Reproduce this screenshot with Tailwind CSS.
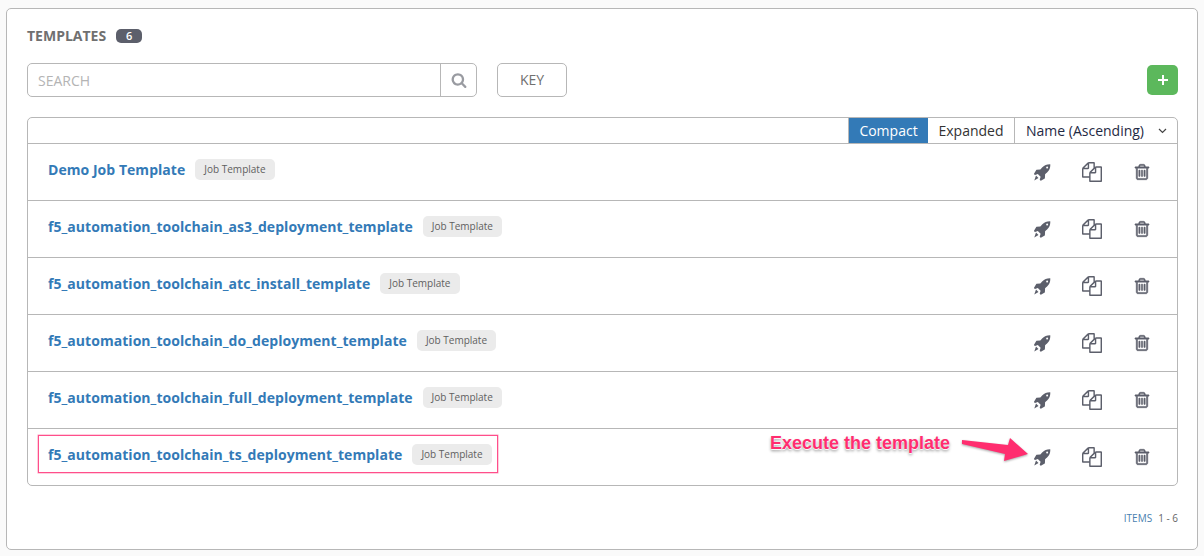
<!DOCTYPE html>
<html>
<head>
<meta charset="utf-8">
<script src="https://cdn.jsdelivr.net/npm/@tailwindcss/browser@4"></script>
</head>
<body class="bg-[#fafafa] font-['Open_Sans',sans-serif] w-[1204px] h-[556px] overflow-hidden">
<div class="relative h-[556px] pt-2 pl-1.5 pr-1.5">
  <div class="bg-white border border-[#b7b7b7] rounded-[5px] h-[542px] pl-5 pr-[19px] pt-[17px]">
    <div class="flex items-center h-5 gap-[10px]">
      <span class="text-sm font-bold text-[#707070] leading-5">TEMPLATES</span>
      <span class="bg-[#5c5f6b] text-white text-[11px] font-semibold rounded-[5px] w-[26px] h-[14px] leading-[14px] text-center">6</span>
    </div>
    <div class="flex items-center mt-[17px] h-[34px]">
      <div class="flex w-[450px] h-[34px] border border-[#b7b7b7] rounded-[5px]">
        <div class="flex-1 pl-2.5 pt-px text-sm leading-8 text-[#b4b4b4]">SEARCH</div>
        <div class="w-9 border-l border-[#b7b7b7] flex items-center justify-center">
          <svg class="w-[16px] h-[16px] fill-[#999ba1]" viewBox="0 0 1792 1792"><path d="M1216 832q0-185-131.500-316.500t-316.500-131.500-316.500 131.500-131.500 316.500 131.500 316.500 316.500 131.500 316.500-131.500 131.500-316.500zm512 832q0 52-38 90t-90 38q-54 0-90-38l-343-342q-179 124-399 124-143 0-273.500-55.500t-225-150-150-225-55.500-273.500 55.500-273.500 150-225 225-150 273.500-55.500 273.500 55.500 225 150 150 225 55.500 273.500q0 220-124 399l343 343q37 37 37 90z"/></svg>
        </div>
      </div>
      <div class="ml-5 w-[70px] h-[34px] border border-[#b7b7b7] rounded-[5px] text-center text-sm leading-8 text-[#707070]">KEY</div>
      <div class="ml-auto w-[31px] h-[30px] bg-[#5cb85c] rounded-[5px] flex items-center justify-center">
        <svg class="w-[10px] h-[10px]" viewBox="0 0 10 10"><path d="M5 0v10M0 5h10" stroke="#fff" stroke-width="2"/></svg>
      </div>
    </div>
    <div class="mt-5 border border-[#b7b7b7] rounded-[5px] h-[369px]">
      <div class="flex justify-end h-[26px] border-b border-[#b7b7b7] text-sm leading-[25px]">
        <div class="bg-[#337ab7] text-white w-[80px] text-center border-l border-[#b7b7b7]">Compact</div>
        <div class="w-[86px] text-center text-[#333]">Expanded</div>
        <div class="w-[163px] border-l border-[#b7b7b7] flex items-center pl-[11px] rounded-tr-[5px]">
          <span class="text-[#1f2a44]">Name (Ascending)</span>
          <svg class="ml-[14px] w-[9px] h-[6px]" viewBox="0 0 9 6"><path d="M1 1l3.500 3.500L8 1" fill="none" stroke="#444" stroke-width="1.200"/></svg>
        </div>
      </div>

      <div class="flex items-center h-[57px] border-b border-[#b7b7b7] pl-5">
        <span class="mb-1 text-sm font-bold text-[#337ab7] tracking-[0.045px]">Demo Job Template</span>
        <span class="mb-1.5 ml-[10px] bg-[#ebebeb] text-[#606060] text-[10px] leading-[21px] h-[21px] px-[9px] rounded-[5px]">Job Template</span>
        <div class="ml-auto flex items-center w-[146px] pl-[2px] gap-[31px]">
          <svg class="w-[18px] h-[18px] fill-[#5c5f6b]" viewBox="0 0 1792 1792"><path d="M1504 448q0-40-28-68t-68-28-68 28-28 68 28 68 68 28 68-28 28-68zm224-288q0 249-75.500 430.500t-253.500 360.500q-81 80-195 176l-20 379q-2 16-16 26l-384 224q-7 4-16 4-12 0-23-9l-64-64q-13-14-8-32l85-276-281-281-276 85q-3 1-9 1-14 0-23-9l-64-64q-17-19-5-39l224-384q10-14 26-16l379-20q96-114 176-195 188-187 358-258t431-71q14 0 24 9.500t10 22.500z"/><path d="M300 1240L550 1490L130 1730Z"/></svg>
          <svg class="w-[20px] h-[20px] fill-[#5c5f6b]" viewBox="0 0 1792 1792"><path d="M1696 384q40 0 68 28t28 68v1216q0 40-28 68t-68 28h-960q-40 0-68-28t-28-68v-288h-544q-40 0-68-28t-28-68v-672q0-40 20-88t48-76l408-408q28-28 76-48t88-20h416q40 0 68 28t28 68v328q68-40 128-40h416zm-544 213l-299 299h299v-299zm-640-384l-299 299h299v-299zm196 647l316-316v-416h-384v416q0 40-28 68t-68 28h-416v640h512v-256q0-40 20-88t48-76zm956 804v-1152h-384v416q0 40-28 68t-68 28h-416v640h896z"/></svg>
          <svg class="w-[18px] h-[18px] fill-[#5c5f6b] stroke-[#5c5f6b] [stroke-width:50]" viewBox="0 0 1792 1792"><path d="M704 736v576q0 14-9 23t-23 9h-64q-14 0-23-9t-9-23v-576q0-14 9-23t23-9h64q14 0 23 9t9 23zm256 0v576q0 14-9 23t-23 9h-64q-14 0-23-9t-9-23v-576q0-14 9-23t23-9h64q14 0 23 9t9 23zm256 0v576q0 14-9 23t-23 9h-64q-14 0-23-9t-9-23v-576q0-14 9-23t23-9h64q14 0 23 9t9 23zm128 724v-948h-896v948q0 22 7 40.500t14.500 27 10.500 8.500h832q3 0 10.500-8.500t14.500-27 7-40.500zm-672-1076h448l-48-117q-7-9-17-11h-317q-10 2-17 11zm928 32v64q0 14-9 23t-23 9h-96v948q0 83-47 143.500t-113 60.500h-832q-66 0-113-58.500t-47-141.500v-952h-96q-14 0-23-9t-9-23v-64q0-14 9-23t23-9h309l70-167q15-37 54-63t79-26h320q40 0 79 26t54 63l70 167h309q14 0 23 9t9 23z"/></svg>
        </div>
      </div>
      <div class="flex items-center h-[57px] border-b border-[#b7b7b7] pl-5">
        <span class="mb-1 text-sm font-bold text-[#337ab7] tracking-[0.045px]">f5_automation_toolchain_as3_deployment_template</span>
        <span class="mb-1.5 ml-[10px] bg-[#ebebeb] text-[#606060] text-[10px] leading-[21px] h-[21px] px-[9px] rounded-[5px]">Job Template</span>
        <div class="ml-auto flex items-center w-[146px] pl-[2px] gap-[31px]">
          <svg class="w-[18px] h-[18px] fill-[#5c5f6b]" viewBox="0 0 1792 1792"><path d="M1504 448q0-40-28-68t-68-28-68 28-28 68 28 68 68 28 68-28 28-68zm224-288q0 249-75.500 430.500t-253.500 360.500q-81 80-195 176l-20 379q-2 16-16 26l-384 224q-7 4-16 4-12 0-23-9l-64-64q-13-14-8-32l85-276-281-281-276 85q-3 1-9 1-14 0-23-9l-64-64q-17-19-5-39l224-384q10-14 26-16l379-20q96-114 176-195 188-187 358-258t431-71q14 0 24 9.500t10 22.500z"/><path d="M300 1240L550 1490L130 1730Z"/></svg>
          <svg class="w-[20px] h-[20px] fill-[#5c5f6b]" viewBox="0 0 1792 1792"><path d="M1696 384q40 0 68 28t28 68v1216q0 40-28 68t-68 28h-960q-40 0-68-28t-28-68v-288h-544q-40 0-68-28t-28-68v-672q0-40 20-88t48-76l408-408q28-28 76-48t88-20h416q40 0 68 28t28 68v328q68-40 128-40h416zm-544 213l-299 299h299v-299zm-640-384l-299 299h299v-299zm196 647l316-316v-416h-384v416q0 40-28 68t-68 28h-416v640h512v-256q0-40 20-88t48-76zm956 804v-1152h-384v416q0 40-28 68t-68 28h-416v640h896z"/></svg>
          <svg class="w-[18px] h-[18px] fill-[#5c5f6b] stroke-[#5c5f6b] [stroke-width:50]" viewBox="0 0 1792 1792"><path d="M704 736v576q0 14-9 23t-23 9h-64q-14 0-23-9t-9-23v-576q0-14 9-23t23-9h64q14 0 23 9t9 23zm256 0v576q0 14-9 23t-23 9h-64q-14 0-23-9t-9-23v-576q0-14 9-23t23-9h64q14 0 23 9t9 23zm256 0v576q0 14-9 23t-23 9h-64q-14 0-23-9t-9-23v-576q0-14 9-23t23-9h64q14 0 23 9t9 23zm128 724v-948h-896v948q0 22 7 40.500t14.500 27 10.500 8.500h832q3 0 10.500-8.500t14.500-27 7-40.500zm-672-1076h448l-48-117q-7-9-17-11h-317q-10 2-17 11zm928 32v64q0 14-9 23t-23 9h-96v948q0 83-47 143.500t-113 60.500h-832q-66 0-113-58.500t-47-141.500v-952h-96q-14 0-23-9t-9-23v-64q0-14 9-23t23-9h309l70-167q15-37 54-63t79-26h320q40 0 79 26t54 63l70 167h309q14 0 23 9t9 23z"/></svg>
        </div>
      </div>
      <div class="flex items-center h-[57px] border-b border-[#b7b7b7] pl-5">
        <span class="mb-1 text-sm font-bold text-[#337ab7] tracking-[0.045px]">f5_automation_toolchain_atc_install_template</span>
        <span class="mb-1.5 ml-[10px] bg-[#ebebeb] text-[#606060] text-[10px] leading-[21px] h-[21px] px-[9px] rounded-[5px]">Job Template</span>
        <div class="ml-auto flex items-center w-[146px] pl-[2px] gap-[31px]">
          <svg class="w-[18px] h-[18px] fill-[#5c5f6b]" viewBox="0 0 1792 1792"><path d="M1504 448q0-40-28-68t-68-28-68 28-28 68 28 68 68 28 68-28 28-68zm224-288q0 249-75.500 430.500t-253.500 360.500q-81 80-195 176l-20 379q-2 16-16 26l-384 224q-7 4-16 4-12 0-23-9l-64-64q-13-14-8-32l85-276-281-281-276 85q-3 1-9 1-14 0-23-9l-64-64q-17-19-5-39l224-384q10-14 26-16l379-20q96-114 176-195 188-187 358-258t431-71q14 0 24 9.500t10 22.500z"/><path d="M300 1240L550 1490L130 1730Z"/></svg>
          <svg class="w-[20px] h-[20px] fill-[#5c5f6b]" viewBox="0 0 1792 1792"><path d="M1696 384q40 0 68 28t28 68v1216q0 40-28 68t-68 28h-960q-40 0-68-28t-28-68v-288h-544q-40 0-68-28t-28-68v-672q0-40 20-88t48-76l408-408q28-28 76-48t88-20h416q40 0 68 28t28 68v328q68-40 128-40h416zm-544 213l-299 299h299v-299zm-640-384l-299 299h299v-299zm196 647l316-316v-416h-384v416q0 40-28 68t-68 28h-416v640h512v-256q0-40 20-88t48-76zm956 804v-1152h-384v416q0 40-28 68t-68 28h-416v640h896z"/></svg>
          <svg class="w-[18px] h-[18px] fill-[#5c5f6b] stroke-[#5c5f6b] [stroke-width:50]" viewBox="0 0 1792 1792"><path d="M704 736v576q0 14-9 23t-23 9h-64q-14 0-23-9t-9-23v-576q0-14 9-23t23-9h64q14 0 23 9t9 23zm256 0v576q0 14-9 23t-23 9h-64q-14 0-23-9t-9-23v-576q0-14 9-23t23-9h64q14 0 23 9t9 23zm256 0v576q0 14-9 23t-23 9h-64q-14 0-23-9t-9-23v-576q0-14 9-23t23-9h64q14 0 23 9t9 23zm128 724v-948h-896v948q0 22 7 40.500t14.500 27 10.500 8.500h832q3 0 10.500-8.500t14.500-27 7-40.500zm-672-1076h448l-48-117q-7-9-17-11h-317q-10 2-17 11zm928 32v64q0 14-9 23t-23 9h-96v948q0 83-47 143.500t-113 60.500h-832q-66 0-113-58.500t-47-141.500v-952h-96q-14 0-23-9t-9-23v-64q0-14 9-23t23-9h309l70-167q15-37 54-63t79-26h320q40 0 79 26t54 63l70 167h309q14 0 23 9t9 23z"/></svg>
        </div>
      </div>
      <div class="flex items-center h-[57px] border-b border-[#b7b7b7] pl-5">
        <span class="mb-1 text-sm font-bold text-[#337ab7] tracking-[0.045px]">f5_automation_toolchain_do_deployment_template</span>
        <span class="mb-1.5 ml-[10px] bg-[#ebebeb] text-[#606060] text-[10px] leading-[21px] h-[21px] px-[9px] rounded-[5px]">Job Template</span>
        <div class="ml-auto flex items-center w-[146px] pl-[2px] gap-[31px]">
          <svg class="w-[18px] h-[18px] fill-[#5c5f6b]" viewBox="0 0 1792 1792"><path d="M1504 448q0-40-28-68t-68-28-68 28-28 68 28 68 68 28 68-28 28-68zm224-288q0 249-75.500 430.500t-253.500 360.500q-81 80-195 176l-20 379q-2 16-16 26l-384 224q-7 4-16 4-12 0-23-9l-64-64q-13-14-8-32l85-276-281-281-276 85q-3 1-9 1-14 0-23-9l-64-64q-17-19-5-39l224-384q10-14 26-16l379-20q96-114 176-195 188-187 358-258t431-71q14 0 24 9.500t10 22.500z"/><path d="M300 1240L550 1490L130 1730Z"/></svg>
          <svg class="w-[20px] h-[20px] fill-[#5c5f6b]" viewBox="0 0 1792 1792"><path d="M1696 384q40 0 68 28t28 68v1216q0 40-28 68t-68 28h-960q-40 0-68-28t-28-68v-288h-544q-40 0-68-28t-28-68v-672q0-40 20-88t48-76l408-408q28-28 76-48t88-20h416q40 0 68 28t28 68v328q68-40 128-40h416zm-544 213l-299 299h299v-299zm-640-384l-299 299h299v-299zm196 647l316-316v-416h-384v416q0 40-28 68t-68 28h-416v640h512v-256q0-40 20-88t48-76zm956 804v-1152h-384v416q0 40-28 68t-68 28h-416v640h896z"/></svg>
          <svg class="w-[18px] h-[18px] fill-[#5c5f6b] stroke-[#5c5f6b] [stroke-width:50]" viewBox="0 0 1792 1792"><path d="M704 736v576q0 14-9 23t-23 9h-64q-14 0-23-9t-9-23v-576q0-14 9-23t23-9h64q14 0 23 9t9 23zm256 0v576q0 14-9 23t-23 9h-64q-14 0-23-9t-9-23v-576q0-14 9-23t23-9h64q14 0 23 9t9 23zm256 0v576q0 14-9 23t-23 9h-64q-14 0-23-9t-9-23v-576q0-14 9-23t23-9h64q14 0 23 9t9 23zm128 724v-948h-896v948q0 22 7 40.500t14.500 27 10.500 8.500h832q3 0 10.500-8.500t14.500-27 7-40.500zm-672-1076h448l-48-117q-7-9-17-11h-317q-10 2-17 11zm928 32v64q0 14-9 23t-23 9h-96v948q0 83-47 143.500t-113 60.500h-832q-66 0-113-58.500t-47-141.500v-952h-96q-14 0-23-9t-9-23v-64q0-14 9-23t23-9h309l70-167q15-37 54-63t79-26h320q40 0 79 26t54 63l70 167h309q14 0 23 9t9 23z"/></svg>
        </div>
      </div>
      <div class="flex items-center h-[57px] border-b border-[#b7b7b7] pl-5">
        <span class="mb-1 text-sm font-bold text-[#337ab7] tracking-[0.045px]">f5_automation_toolchain_full_deployment_template</span>
        <span class="mb-1.5 ml-[10px] bg-[#ebebeb] text-[#606060] text-[10px] leading-[21px] h-[21px] px-[9px] rounded-[5px]">Job Template</span>
        <div class="ml-auto flex items-center w-[146px] pl-[2px] gap-[31px]">
          <svg class="w-[18px] h-[18px] fill-[#5c5f6b]" viewBox="0 0 1792 1792"><path d="M1504 448q0-40-28-68t-68-28-68 28-28 68 28 68 68 28 68-28 28-68zm224-288q0 249-75.500 430.500t-253.500 360.500q-81 80-195 176l-20 379q-2 16-16 26l-384 224q-7 4-16 4-12 0-23-9l-64-64q-13-14-8-32l85-276-281-281-276 85q-3 1-9 1-14 0-23-9l-64-64q-17-19-5-39l224-384q10-14 26-16l379-20q96-114 176-195 188-187 358-258t431-71q14 0 24 9.500t10 22.500z"/><path d="M300 1240L550 1490L130 1730Z"/></svg>
          <svg class="w-[20px] h-[20px] fill-[#5c5f6b]" viewBox="0 0 1792 1792"><path d="M1696 384q40 0 68 28t28 68v1216q0 40-28 68t-68 28h-960q-40 0-68-28t-28-68v-288h-544q-40 0-68-28t-28-68v-672q0-40 20-88t48-76l408-408q28-28 76-48t88-20h416q40 0 68 28t28 68v328q68-40 128-40h416zm-544 213l-299 299h299v-299zm-640-384l-299 299h299v-299zm196 647l316-316v-416h-384v416q0 40-28 68t-68 28h-416v640h512v-256q0-40 20-88t48-76zm956 804v-1152h-384v416q0 40-28 68t-68 28h-416v640h896z"/></svg>
          <svg class="w-[18px] h-[18px] fill-[#5c5f6b] stroke-[#5c5f6b] [stroke-width:50]" viewBox="0 0 1792 1792"><path d="M704 736v576q0 14-9 23t-23 9h-64q-14 0-23-9t-9-23v-576q0-14 9-23t23-9h64q14 0 23 9t9 23zm256 0v576q0 14-9 23t-23 9h-64q-14 0-23-9t-9-23v-576q0-14 9-23t23-9h64q14 0 23 9t9 23zm256 0v576q0 14-9 23t-23 9h-64q-14 0-23-9t-9-23v-576q0-14 9-23t23-9h64q14 0 23 9t9 23zm128 724v-948h-896v948q0 22 7 40.500t14.500 27 10.500 8.500h832q3 0 10.500-8.500t14.500-27 7-40.500zm-672-1076h448l-48-117q-7-9-17-11h-317q-10 2-17 11zm928 32v64q0 14-9 23t-23 9h-96v948q0 83-47 143.500t-113 60.500h-832q-66 0-113-58.500t-47-141.500v-952h-96q-14 0-23-9t-9-23v-64q0-14 9-23t23-9h309l70-167q15-37 54-63t79-26h320q40 0 79 26t54 63l70 167h309q14 0 23 9t9 23z"/></svg>
        </div>
      </div>
      <div class="flex items-center h-[56px] pl-5">
        <span class="mb-[5px] text-sm font-bold text-[#337ab7] tracking-[0.045px]">f5_automation_toolchain_ts_deployment_template</span>
        <span class="mb-[5px] ml-[10px] bg-[#ebebeb] text-[#606060] text-[10px] leading-[21px] h-[21px] px-[9px] rounded-[5px]">Job Template</span>
        <div class="ml-auto flex items-center w-[146px] pl-[2px] gap-[31px]">
          <svg class="w-[18px] h-[18px] fill-[#5c5f6b]" viewBox="0 0 1792 1792"><path d="M1504 448q0-40-28-68t-68-28-68 28-28 68 28 68 68 28 68-28 28-68zm224-288q0 249-75.500 430.500t-253.500 360.500q-81 80-195 176l-20 379q-2 16-16 26l-384 224q-7 4-16 4-12 0-23-9l-64-64q-13-14-8-32l85-276-281-281-276 85q-3 1-9 1-14 0-23-9l-64-64q-17-19-5-39l224-384q10-14 26-16l379-20q96-114 176-195 188-187 358-258t431-71q14 0 24 9.500t10 22.500z"/><path d="M300 1240L550 1490L130 1730Z"/></svg>
          <svg class="w-[20px] h-[20px] fill-[#5c5f6b]" viewBox="0 0 1792 1792"><path d="M1696 384q40 0 68 28t28 68v1216q0 40-28 68t-68 28h-960q-40 0-68-28t-28-68v-288h-544q-40 0-68-28t-28-68v-672q0-40 20-88t48-76l408-408q28-28 76-48t88-20h416q40 0 68 28t28 68v328q68-40 128-40h416zm-544 213l-299 299h299v-299zm-640-384l-299 299h299v-299zm196 647l316-316v-416h-384v416q0 40-28 68t-68 28h-416v640h512v-256q0-40 20-88t48-76zm956 804v-1152h-384v416q0 40-28 68t-68 28h-416v640h896z"/></svg>
          <svg class="w-[18px] h-[18px] fill-[#5c5f6b] stroke-[#5c5f6b] [stroke-width:50]" viewBox="0 0 1792 1792"><path d="M704 736v576q0 14-9 23t-23 9h-64q-14 0-23-9t-9-23v-576q0-14 9-23t23-9h64q14 0 23 9t9 23zm256 0v576q0 14-9 23t-23 9h-64q-14 0-23-9t-9-23v-576q0-14 9-23t23-9h64q14 0 23 9t9 23zm256 0v576q0 14-9 23t-23 9h-64q-14 0-23-9t-9-23v-576q0-14 9-23t23-9h64q14 0 23 9t9 23zm128 724v-948h-896v948q0 22 7 40.500t14.500 27 10.500 8.500h832q3 0 10.500-8.500t14.500-27 7-40.500zm-672-1076h448l-48-117q-7-9-17-11h-317q-10 2-17 11zm928 32v64q0 14-9 23t-23 9h-96v948q0 83-47 143.500t-113 60.500h-832q-66 0-113-58.500t-47-141.500v-952h-96q-14 0-23-9t-9-23v-64q0-14 9-23t23-9h309l70-167q15-37 54-63t79-26h320q40 0 79 26t54 63l70 167h309q14 0 23 9t9 23z"/></svg>
        </div>
      </div>
    </div>
    <div class="flex justify-end mt-[26px] text-[10px] leading-3 text-[#666]">
      <span class="text-[#4a7fb0]">ITEMS</span><span class="ml-[6px]">1 - 6</span>
    </div>
  </div>

  <div class="absolute left-[38px] top-[435px] w-[460px] h-[38px] border border-[#ff4f8b] shadow-[0_0_0_0.5px_#ff9dbd]"></div>
  <div class="absolute left-[770px] top-[433px] font-['Liberation_Sans',sans-serif] font-bold text-[18px] leading-5 text-[#ff2d6f] [text-shadow:0_0_1px_#fff,0_1px_1px_#fff,0_2px_3px_rgba(0,0,0,0.45)]">Execute the template</div>
  <svg class="absolute left-[955px] top-[430px] w-[80px] h-[40px]" viewBox="0 0 80 40"><path d="M7 10L53 15L55 8L73 24L49 31L50 24L7 14Z" fill="#ff2d6f" style="filter:drop-shadow(0 1.5px 1px rgba(0,0,0,.35))"/></svg>
</div>
</body>
</html>
